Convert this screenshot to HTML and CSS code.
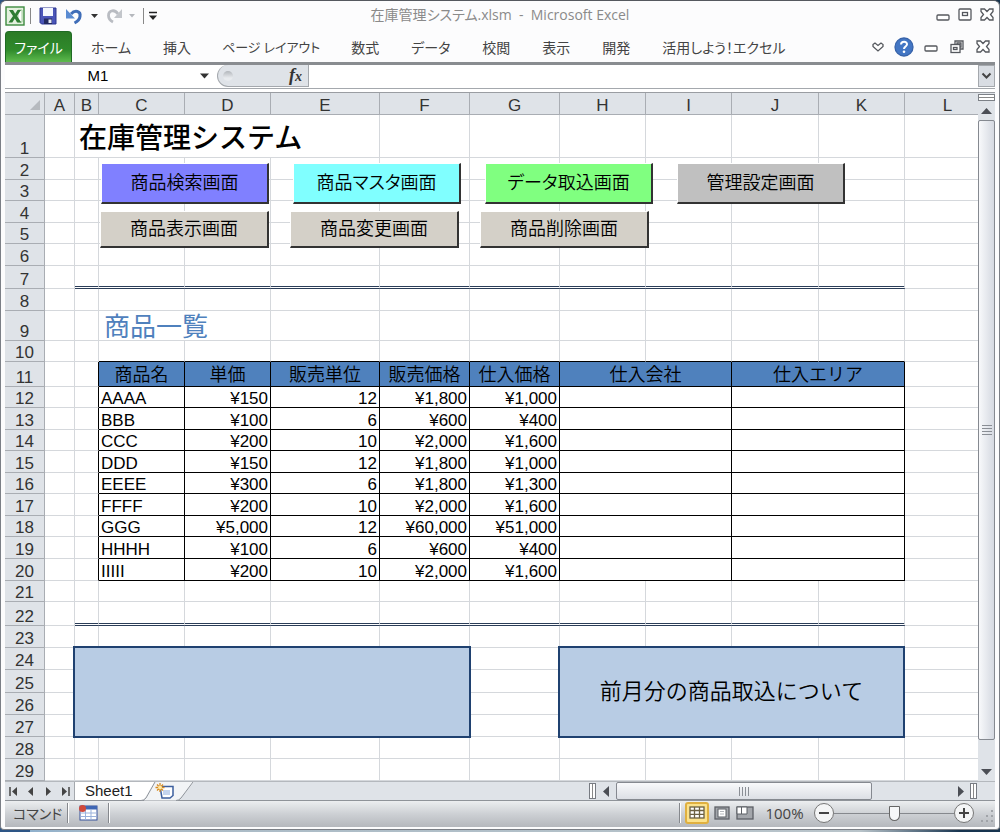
FILE: index.html
```html
<!DOCTYPE html>
<html lang="ja">
<head>
<meta charset="utf-8">
<title>在庫管理システム.xlsm - Microsoft Excel</title>
<link rel="stylesheet" href="styles.css">
</head>
<body>
<div class="window">
  <header class="titlebar">
    <div class="quick">
      <svg class="app-icon" width="20" height="20" viewBox="0 0 20 20" aria-hidden="true">
        <rect x="1" y="1" width="18" height="18" fill="#e4f1df" stroke="#3d8b3f" stroke-width="1.4"/>
        <path d="M13 4h4v12h-4z" fill="#fff" stroke="#8fc18a" stroke-width=".8"/>
        <path d="M4 4h4l2.200 3.800L12.500 4H16l-4 6 4.300 6.500h-4.200L9.800 12.500 7.300 16.500H3.500L8 10z" fill="#2e7d32"/>
      </svg>
      <span class="bar"></span>
      <button class="tool" aria-label="上書き保存">
        <svg width="18" height="18" viewBox="0 0 18 18"><path d="M1 1h16v16H2.500L1 15.500z" fill="#4a55b8" stroke="#2c3690"/><path d="M4 1h10v8H4z" fill="#f3f6fd"/><path d="M5 11.500h8V17H5z" fill="#232a60"/><path d="M9.500 12.500h3V16h-3z" fill="#e6eaf6"/></svg>
      </button>
      <button class="tool" aria-label="元に戻す">
        <svg width="18" height="18" viewBox="0 0 18 18"><path d="M6 7C10 2.500 16 4 15 9.500c-.4 3-2.500 5-5.500 6.500" fill="none" stroke="#3f6db8" stroke-width="3"/><path d="M1 2v9.500h9z" fill="#5a8bd2"/></svg>
      </button>
      <button class="tool caret" aria-label="元に戻す一覧"><svg width="8" height="8" viewBox="0 0 8 8"><path d="M0 2h7L3.500 6z" fill="#333"/></svg></button>
      <button class="tool redo" aria-label="やり直し">
        <svg width="18" height="18" viewBox="0 0 18 18"><path d="M12 7C9 2 2.500 3 2.500 8.500c0 3 1.500 5 4.500 6.500" fill="none" stroke="#b9bcc2" stroke-width="2.800"/><path d="M16 2v9H8z" fill="#c3c6cb"/></svg>
      </button>
      <button class="tool caret" aria-label="やり直し一覧"><svg width="8" height="8" viewBox="0 0 8 8"><path d="M1 2h6L4 5.500z" fill="#b5b8bd"/></svg></button>
      <span class="bar"></span>
      <button class="tool custom" aria-label="クイック アクセスのカスタマイズ"><svg width="10" height="12" viewBox="0 0 10 12"><path d="M1 2.500h8" stroke="#222" stroke-width="1.500"/><path d="M1 5.500h8L5 10z" fill="#222"/></svg></button>
    </div>
    <h1 class="caption">在庫管理システム.xlsm&nbsp; -&nbsp; Microsoft Excel</h1>
    <div class="controls">
      <button aria-label="最小化"><svg width="16" height="16" viewBox="0 0 16 16"><rect x="2" y="8" width="12" height="5" rx="1"/></svg></button>
      <button aria-label="最大化"><svg width="16" height="16" viewBox="0 0 16 16"><rect x="2" y="2" width="12" height="11" rx="1"/><rect x="5.500" y="5.500" width="5" height="3"/></svg></button>
      <button aria-label="閉じる"><svg width="16" height="16" viewBox="0 0 16 16"><path d="M2 2h3.500L8 4.500 10.500 2H14v2.500l-2.500 3L14 10.500V13h-3.500L8 10.500 5.500 13H2v-2.500l2.500-3L2 4.500z"/></svg></button>
    </div>
  </header>

  <nav class="ribbon">
    <a class="file" href="#file">ファイル</a>
    <a href="#home">ホーム</a>
    <a href="#insert">挿入</a>
    <a href="#layout" class="tight">ページ レイアウト</a>
    <a href="#formula">数式</a>
    <a href="#data">データ</a>
    <a href="#review">校閲</a>
    <a href="#view">表示</a>
    <a href="#dev">開発</a>
    <a href="#use">活用しよう！エクセル</a>
    <div class="controls doc">
      <button aria-label="リボンの最小化"><svg width="16" height="16" viewBox="0 0 16 16"><path d="M3 5.500L5 4l3 2.500L11 4l2 1.500v2L8 12 3 7.500z"/></svg></button>
      <button aria-label="ヘルプ" class="help"><svg width="20" height="20" viewBox="0 0 20 20"><circle cx="10" cy="10" r="9" fill="#4376c4" stroke="#3763aa"/><path d="M7 7.500C7.200 3.800 13.300 4 13 7.500c-.2 2-3 2.200-3 4.500" fill="none" stroke="#fff" stroke-width="2"/><circle cx="10" cy="14.800" r="1.300" fill="#fff" stroke="none"/></svg></button>
      <button aria-label="ブックの最小化"><svg width="16" height="16" viewBox="0 0 16 16"><rect x="2" y="7" width="12" height="5" rx="1"/></svg></button>
      <button aria-label="ブックを元に戻す"><svg width="16" height="16" viewBox="0 0 16 16"><path d="M6 5V2h8v8h-3"/><path d="M8 5V4h4v4h-1"/><rect x="2" y="5.500" width="9" height="8"/><rect x="4.500" y="8.500" width="3.500" height="2"/></svg></button>
      <button aria-label="ブックを閉じる"><svg width="16" height="16" viewBox="0 0 16 16"><path d="M2 2h3.500L8 4.500 10.500 2H14v2.500l-2.500 3L14 10.500V13h-3.500L8 10.500 5.500 13H2v-2.500l2.500-3L2 4.500z"/></svg></button>
    </div>
  </nav>

  <div class="formula">
    <input class="name" type="text" value="M1" aria-label="名前ボックス">
    <button class="drop" aria-label="名前の一覧"><svg width="9" height="6" viewBox="0 0 9 6"><path d="M0 .5h9L4.500 5.500z" fill="#333"/></svg></button>
    <div class="fx">
      <span class="knob"></span>
      <button aria-label="関数の挿入"><i>f</i><i class="sub">x</i></button>
    </div>
    <input class="entry" type="text" aria-label="数式バー">
    <button class="expand" aria-label="数式バーの展開"><svg width="11" height="8" viewBox="0 0 11 8"><path d="M1.500 1.500l4 4 4-4" fill="none" stroke="#444" stroke-width="2"/></svg></button>
  </div>

  <main class="work">
    <div class="sheet">
      <table class="grid">
        <colgroup><col class="w-head"><col class="w-a"><col class="w-b"><col class="w-m"><col class="w-m"><col class="w-e"><col class="w-f"><col class="w-f"><col class="w-m"><col class="w-m"><col class="w-j"><col class="w-m"><col></colgroup>
        <thead>
          <tr class="r22"><th class="corner"><svg width="10" height="10" viewBox="0 0 10 10" aria-hidden="true"><path d="M10 0v10H0z" fill="#b6babf"/></svg></th><th>A</th><th>B</th><th>C</th><th>D</th><th>E</th><th>F</th><th>G</th><th>H</th><th>I</th><th>J</th><th>K</th><th class="last">L</th></tr>
        </thead>
        <tbody>
          <tr class="r43"><th>1</th><td></td><td colspan="4" class="title">在庫管理システム</td><td></td><td></td><td></td><td></td><td></td><td></td><td class="last"></td></tr>
          <tr class="r22"><th>2</th><td></td><td></td><td></td><td></td><td></td><td></td><td></td><td></td><td></td><td></td><td></td><td class="last"></td></tr>
          <tr class="r21"><th>3</th><td></td><td></td><td></td><td></td><td></td><td></td><td></td><td></td><td></td><td></td><td></td><td class="last"></td></tr>
          <tr class="r22"><th>4</th><td></td><td></td><td></td><td></td><td></td><td></td><td></td><td></td><td></td><td></td><td></td><td class="last"></td></tr>
          <tr class="r21"><th>5</th><td></td><td></td><td></td><td></td><td></td><td></td><td></td><td></td><td></td><td></td><td></td><td class="last"></td></tr>
          <tr class="r22"><th>6</th><td></td><td></td><td></td><td></td><td></td><td></td><td></td><td></td><td></td><td></td><td></td><td class="last"></td></tr>
          <tr class="r23 ruled"><th>7</th><td class="plain"></td><td></td><td></td><td></td><td></td><td></td><td></td><td></td><td></td><td></td><td></td><td class="last"></td></tr>
          <tr class="r22"><th>8</th><td></td><td></td><td></td><td></td><td></td><td></td><td></td><td></td><td></td><td></td><td></td><td class="last"></td></tr>
          <tr class="r30"><th>9</th><td></td><td></td><td colspan="2" class="subtitle">商品一覧</td><td></td><td></td><td></td><td></td><td></td><td></td><td></td><td class="last"></td></tr>
          <tr class="r21 above"><th>10</th><td></td><td></td><td></td><td></td><td></td><td></td><td></td><td></td><td></td><td></td><td></td><td class="last"></td></tr>
          <tr class="r25 heads"><th>11</th><td></td><td class="edge"></td><td>商品名</td><td>単価</td><td>販売単位</td><td>販売価格</td><td>仕入価格</td><td colspan="2">仕入会社</td><td colspan="2">仕入エリア</td><td class="last"></td></tr>
          <tr class="r21 item"><th>12</th><td></td><td class="edge"></td><td class="text">AAAA</td><td>¥150</td><td>12</td><td>¥1,800</td><td>¥1,000</td><td colspan="2"></td><td colspan="2"></td><td class="last"></td></tr>
          <tr class="r22 item"><th>13</th><td></td><td class="edge"></td><td class="text">BBB</td><td>¥100</td><td>6</td><td>¥600</td><td>¥400</td><td colspan="2"></td><td colspan="2"></td><td class="last"></td></tr>
          <tr class="r21 item"><th>14</th><td></td><td class="edge"></td><td class="text">CCC</td><td>¥200</td><td>10</td><td>¥2,000</td><td>¥1,600</td><td colspan="2"></td><td colspan="2"></td><td class="last"></td></tr>
          <tr class="r22 item"><th>15</th><td></td><td class="edge"></td><td class="text">DDD</td><td>¥150</td><td>12</td><td>¥1,800</td><td>¥1,000</td><td colspan="2"></td><td colspan="2"></td><td class="last"></td></tr>
          <tr class="r21 item"><th>16</th><td></td><td class="edge"></td><td class="text">EEEE</td><td>¥300</td><td>6</td><td>¥1,800</td><td>¥1,300</td><td colspan="2"></td><td colspan="2"></td><td class="last"></td></tr>
          <tr class="r22 item"><th>17</th><td></td><td class="edge"></td><td class="text">FFFF</td><td>¥200</td><td>10</td><td>¥2,000</td><td>¥1,600</td><td colspan="2"></td><td colspan="2"></td><td class="last"></td></tr>
          <tr class="r21 item"><th>18</th><td></td><td class="edge"></td><td class="text">GGG</td><td>¥5,000</td><td>12</td><td>¥60,000</td><td>¥51,000</td><td colspan="2"></td><td colspan="2"></td><td class="last"></td></tr>
          <tr class="r22 item"><th>19</th><td></td><td class="edge"></td><td class="text">HHHH</td><td>¥100</td><td>6</td><td>¥600</td><td>¥400</td><td colspan="2"></td><td colspan="2"></td><td class="last"></td></tr>
          <tr class="r22 item"><th>20</th><td></td><td class="edge"></td><td class="text">IIIII</td><td>¥200</td><td>10</td><td>¥2,000</td><td>¥1,600</td><td colspan="2"></td><td colspan="2"></td><td class="last"></td></tr>
          <tr class="r21"><th>21</th><td></td><td></td><td></td><td></td><td></td><td></td><td></td><td></td><td></td><td></td><td></td><td class="last"></td></tr>
          <tr class="r24 ruled"><th>22</th><td class="plain"></td><td></td><td></td><td></td><td></td><td></td><td></td><td></td><td></td><td></td><td></td><td class="last"></td></tr>
          <tr class="r22"><th>23</th><td></td><td></td><td></td><td></td><td></td><td></td><td></td><td></td><td></td><td></td><td></td><td class="last"></td></tr>
          <tr class="r22"><th>24</th><td></td><td></td><td></td><td></td><td></td><td></td><td></td><td></td><td></td><td></td><td></td><td class="last"></td></tr>
          <tr class="r23"><th>25</th><td></td><td></td><td></td><td></td><td></td><td></td><td></td><td></td><td></td><td></td><td></td><td class="last"></td></tr>
          <tr class="r22"><th>26</th><td></td><td></td><td></td><td></td><td></td><td></td><td></td><td></td><td></td><td></td><td></td><td class="last"></td></tr>
          <tr class="r22"><th>27</th><td></td><td></td><td></td><td></td><td></td><td></td><td></td><td></td><td></td><td></td><td></td><td class="last"></td></tr>
          <tr class="r22"><th>28</th><td></td><td></td><td></td><td></td><td></td><td></td><td></td><td></td><td></td><td></td><td></td><td class="last"></td></tr>
          <tr class="r22"><th>29</th><td></td><td></td><td></td><td></td><td></td><td></td><td></td><td></td><td></td><td></td><td></td><td class="last"></td></tr>
        </tbody>
      </table>
      <div class="macros macros-main">
        <button class="macro violet">商品検索画面</button>
        <button class="macro cyan">商品マスタ画面</button>
        <button class="macro green">データ取込画面</button>
        <button class="macro gray">管理設定画面</button>
      </div>
      <div class="macros macros-sub">
        <button class="macro">商品表示画面</button>
        <button class="macro">商品変更画面</button>
        <button class="macro">商品削除画面</button>
      </div>
      <div class="note note-left"></div>
      <div class="note note-right">前月分の商品取込について</div>
    </div>
    <div class="vscroll">
      <span class="vsplit"></span>
      <button aria-label="上へスクロール"><svg width="11" height="6" viewBox="0 0 11 6"><path d="M0 6h11L5.500 0z" fill="#4b4e55"/></svg></button>
      <div class="vtrack"><div class="vthumb"></div></div>
      <button aria-label="下へスクロール"><svg width="11" height="6" viewBox="0 0 11 6"><path d="M0 0h11L5.500 6z" fill="#4b4e55"/></svg></button>
    </div>
  </main>

  <div class="tabs">
    <div class="nav">
      <button aria-label="先頭のシート"><svg width="9" height="9" viewBox="0 0 9 9"><path d="M1 0v9" stroke="#444" stroke-width="1.500"/><path d="M8 0v9L3 4.500z" fill="#444"/></svg></button>
      <button aria-label="前のシート"><svg width="9" height="9" viewBox="0 0 9 9"><path d="M7 0v9L2 4.500z" fill="#444"/></svg></button>
      <button aria-label="次のシート"><svg width="9" height="9" viewBox="0 0 9 9"><path d="M2 0v9l5-4.500z" fill="#444"/></svg></button>
      <button aria-label="最後のシート"><svg width="9" height="9" viewBox="0 0 9 9"><path d="M8 0v9" stroke="#444" stroke-width="1.500"/><path d="M1 0v9l5-4.500z" fill="#444"/></svg></button>
    </div>
    <a class="tab" href="#sheet1">Sheet1</a>
    <button class="add" aria-label="ワークシートの挿入">
      <svg width="56" height="19" viewBox="0 0 56 19"><path d="M0 0h14L4 16Q2 18.500 0 18.500z" fill="#fff"/><path d="M13 0h40L40 16q-2 2.500-5 2.500H3z" fill="#f2f4f6"/><path d="M0 18.500Q3 18.500 5 16L14 0M35 18.500q3 0 5-2.500L52 0" fill="none" stroke="#8e939a"/><path d="M19 4.500h13v9l-3 2.500h-8z" fill="#fff" stroke="#3d5f9e" stroke-width="1.500"/><path d="M22 8h7v5h-7z" fill="#c4d4ee"/><path d="M19 1v9M14.500 5.500h9M16 2.500l6 6M22 2.500l-6 6" stroke="#d88b22" stroke-width="1.300"/><circle cx="19" cy="5.500" r="2" fill="#ffe9a3"/></svg>
    </button>
    <div class="space"></div>
    <div class="hscroll">
      <span class="hsplit"></span>
      <button aria-label="左へスクロール"><svg width="7" height="11" viewBox="0 0 7 11"><path d="M6 0v11L0 5.500z" fill="#4b4e55"/></svg></button>
      <div class="htrack"><div class="hthumb"></div></div>
      <button aria-label="右へスクロール"><svg width="7" height="11" viewBox="0 0 7 11"><path d="M1 0v11l6-5.500z" fill="#4b4e55"/></svg></button>
      <span class="hsplit"></span>
    </div>
  </div>

  <footer class="status">
    <span class="mode">コマンド</span>
    <span class="divider"></span>
    <button class="record" aria-label="マクロの記録"><svg width="20" height="18" viewBox="0 0 20 18"><rect x="2" y="2" width="17" height="14" fill="#fff" stroke="#35509a"/><path d="M2 2h17v3.500H2z" fill="#3f66b4"/><path d="M2.500 9h16M2.500 12.500h16M7.500 5.500V16M13 5.500V16" stroke="#9ab2dc"/><circle cx="4.500" cy="4.500" r="3.500" fill="#d0483a"/></svg></button>
    <span class="divider"></span>
    <div class="space"></div>
    <span class="divider"></span>
    <div class="views">
      <button class="on" aria-label="標準"><svg width="16" height="14" viewBox="0 0 16 14"><rect x="1" y="1" width="14" height="11" fill="#fff" stroke="#6b6042" stroke-width="1.300"/><path d="M1 4.500h14M1 8.300h14M5.500 1v11M10.500 1v11" stroke="#6b6042" stroke-width="1.300"/></svg></button>
      <button aria-label="ページ レイアウト"><svg width="16" height="14" viewBox="0 0 16 14"><rect x="1" y="1" width="14" height="12" fill="#a3a6ab" stroke="#5d6066" stroke-width="1.300"/><rect x="4" y="3" width="8" height="8" fill="#fff" stroke="#5d6066"/><path d="M6 5.500h4M6 8h4" stroke="#b5b8bd"/></svg></button>
      <button aria-label="改ページ プレビュー"><svg width="18" height="14" viewBox="0 0 18 14"><rect x="1" y="1" width="16" height="12" fill="#a3a6ab" stroke="#5d6066" stroke-width="1.300"/><path d="M1 1h4.500v7H1zM5.500 1H11v7H5.500z" fill="#fff" stroke="#5d6066"/></svg></button>
    </div>
    <button class="percent">100%</button>
    <div class="zoom">
      <button class="round" aria-label="縮小"><svg width="10" height="10" viewBox="0 0 10 10"><path d="M0 5h10" stroke="#444" stroke-width="2"/></svg></button>
      <input type="range" min="0" max="100" value="50" aria-label="ズーム">
      <button class="round" aria-label="拡大"><svg width="10" height="10" viewBox="0 0 10 10"><path d="M0 5h10M5 0v10" stroke="#444" stroke-width="2"/></svg></button>
    </div>
    <svg class="sizer" width="14" height="14" viewBox="0 0 14 14" aria-hidden="true"><path d="M10 1h2v2h-2zM10 6h2v2h-2zM10 11h2v2h-2zM5 6h2v2H5zM5 11h2v2H5zM0 11h2v2H0z" fill="#a0a3a8"/></svg>
  </footer>
</div>
</body>
</html>
```
FILE: styles.css
```css
* { box-sizing: border-box; }

body {
  margin: 0;
  background: linear-gradient(90deg, #2d5585 0, #2d5585 30px, #8fb0cc 30px, #a9bac6 110px, #b9c4ca 86%, #17344f 96%);
  font-family: "Liberation Sans", "Noto Sans CJK JP", sans-serif;
  color: #222;
}

button {
  margin: 0;
  padding: 0;
  border: 0;
  background: none;
  color: inherit;
  font: inherit;
  display: flex;
  align-items: center;
  justify-content: center;
}

a { color: inherit; text-decoration: none; }
svg { display: block; }

.window {
  display: flex;
  flex-direction: column;
  min-height: calc(100vh - 4px);
  padding: 0 4px 2px;
  border: 1px solid #7b7f86;
  border-top-color: #55595f;
  border-radius: 6px 6px 4px 4px;
  background: #fcfcfd;
}

/* title bar */
.titlebar {
  display: grid;
  grid-template-columns: 1fr auto 1fr;
  align-items: center;
  height: 30px;
}

.quick { display: flex; align-items: center; height: 30px; }
.bar { width: 1px; height: 16px; margin: 0 8px 0 5px; background: #888; }
.tool { margin-right: 8px; }
.tool.caret { margin-right: 7px; }
.tool.redo { margin-right: 4px; }
.tool.custom { margin: 0; }
.caret + .bar { margin: 0 4px 0 0; }

.caption {
  margin: 0;
  padding-bottom: 2px;
  color: #8a8a8a;
  font: 400 14px/20px "Open Sans", "Noto Sans CJK JP", sans-serif;
  font-feature-settings: "palt";
}

.controls { display: flex; justify-content: flex-end; align-items: center; gap: 6px; }
.controls svg { fill: #fff; stroke: #55585e; stroke-width: 1.300; }
.titlebar .controls { padding-bottom: 2px; }

/* ribbon */
.ribbon {
  display: flex;
  align-items: center;
  height: 34px;
  border-bottom: 3px solid #898c90;
  color: #444;
  font: 400 14px/20px "Noto Sans CJK JP", sans-serif;
  font-feature-settings: "palt";
}

.ribbon a { padding: 0 16px; white-space: nowrap; }
.ribbon .tight { padding: 0 15px; font-size: 13px; }

.ribbon .file {
  display: flex;
  align-items: center;
  justify-content: center;
  align-self: stretch;
  width: 67px;
  margin-right: 3px;
  padding: 0;
  border: 1px solid #1f6a24;
  border-bottom: 0;
  border-radius: 4px 4px 0 0;
  background: linear-gradient(#2b7a26, #2f8a2b 60%, #5fbb4e);
  color: #fff;
}

.controls.doc { flex: 1; gap: 10px; padding-right: 4px; }
.doc .help { margin: 0 -1px 0 -2px; }

/* formula bar */
.formula {
  display: flex;
  height: 28px;
  border-bottom: 1px solid #9a9da2;
  box-shadow: inset 0 -3px #fff, inset 0 -4px #a4a8ad;
  padding-bottom: 5px;
  background: #fff;
}

.formula input { border: 0; outline: 0; background: #fff; padding: 0; font: 15px/20px "Liberation Sans", sans-serif; }
.formula .name { width: 186px; text-align: center; }
.drop { width: 26px; }

.fx {
  display: flex;
  align-items: center;
  justify-content: space-between;
  width: 92px;
  padding: 0 6px 0 5px;
  border: 1px solid #a4a8ad;
  border-top: 0;
  border-radius: 12px 0 0 12px;
  background: #dfe3e8;
}

.knob { width: 10px; height: 10px; border-radius: 50%; background: linear-gradient(#b2b6bb, #e8ebee 70%); }
.fx button { font: 700 18px/20px "Liberation Serif", serif; color: #333; align-items: baseline; }
.fx .sub { font-size: 14px; }
.entry { flex: 1; min-width: 0; }
.expand { width: 17px; border: 1px solid #a4a8ad; background: #d9dde3; }

/* worksheet */
.work { display: flex; flex: 1; }
.sheet { position: relative; flex: 1; min-width: 0; background: #fff; }

.grid { width: 100%; table-layout: fixed; border-collapse: separate; border-spacing: 0; font-size: 17px; line-height: 17px; }
.w-head { width: 40px; }
.w-a { width: 30px; }
.w-b { width: 24px; }
.w-m { width: 86px; }
.w-e { width: 109px; }
.w-f { width: 90px; }
.w-j { width: 87px; }

.r21 { height: 21px; }
.r22 { height: 22px; }
.r23 { height: 23px; }
.r24 { height: 24px; }
.r25 { height: 25px; }
.r30 { height: 30px; }
.r43 { height: 43px; }

.grid th, .grid td {
  padding: 0 2px;
  border: 0 solid #d5d8dc;
  border-width: 0 1px 1px 0;
  vertical-align: bottom;
  white-space: nowrap;
}

.grid th {
  border-color: #a9adb3;
  background: #dfe3e8;
  color: #333;
  font-weight: 400;
  text-align: center;
}

.grid .last { border-right: 0; }
.grid th.last { padding-left: 14px; }
.grid .corner svg { margin: 0 2px 4px auto; }
.grid .title { padding-left: 4px; font-size: 28px; line-height: 36px; font-weight: 500; color: #000; }
.grid .subtitle { padding-left: 5px; font-size: 26px; line-height: 26px; color: #4f81bd; font-weight: 400; }
.ruled td:not(.plain):not(.last) { border-bottom: 3px double #2b3d58; }
.above td:nth-child(n+4):not(.last) { border-bottom-color: #000; }
.grid .edge { border-right-color: #000; }
.heads td:nth-child(n+4):not(.last),
.item td:nth-child(n+4):not(.last) { border-color: #000; color: #000; }
.heads td:nth-child(n+4):not(.last) { background: #4f81bd; text-align: center; font-size: 18px; line-height: 22px; font-weight: 350; }
.item td { text-align: right; }
.item .text { text-align: left; }

/* objects floating over the cells */
.macros { position: absolute; display: flex; }
.macros-main { top: 70px; left: 96px; gap: 24px; }
.macros-sub { top: 118px; left: 95px; gap: 21px; }

.macro {
  width: 168px;
  height: 41px;
  border: 1px solid #fff;
  border-right: 2px solid #333;
  border-bottom: 2px solid #333;
  background: #d4d0c8;
  color: #000;
  font-size: 18px;
  line-height: 24px;
  font-weight: 350;
  font-feature-settings: "palt";
}

.macros-sub .macro { width: 169px; height: 37px; }
.violet { background: #8080ff; }
.cyan { background: #80ffff; }
.green { background: #80ff80; }
.gray { background: #c0c0c0; }

.note {
  position: absolute;
  top: 553px;
  display: flex;
  align-items: center;
  justify-content: center;
  height: 92px;
  border: 2px solid #1f4170;
  background: #b8cce4;
  color: #000;
  font-size: 22px;
  line-height: 30px;
  font-weight: 350;
}

.note-left { left: 68px; width: 398px; }
.note-right { left: 553px; width: 347px; }

/* scrollbars */
.vscroll { display: flex; flex-direction: column; width: 17px; background: #dfe3e8; }
.vsplit { height: 7px; margin-top: 1px; border: 1px solid #7d8187; background: linear-gradient(#fff 2px, #888 2px, #888 3px, #fff 3px); }
.vscroll button { height: 19px; }
.vtrack { flex: 1; padding-bottom: 22px; display: flex; }

.vthumb {
  flex: 1;
  border: 1px solid #858990;
  border-radius: 2px;
  background:
    repeating-linear-gradient(#8a8e95 0, #8a8e95 1px, transparent 1px, transparent 3px) center / 10px 10px no-repeat,
    linear-gradient(90deg, #f8f9fb, #d5d9e1);
}

.tabs { display: flex; height: 20px; border-top: 1px solid #b4b8bd; border-bottom: 1px solid #8f9399; background: #dfe3e8; }
.nav { display: flex; width: 70px; border-right: 1px solid #a4a8ad; }
.nav button { flex: 1; }
.tab { padding: 0 0 0 10px; background: #fff; font-size: 15px; line-height: 18px; width: 66px; }
.space { flex: 1; }
.hscroll { display: flex; align-items: center; width: 41%; padding-right: 18px; }
.hsplit { width: 7px; height: 16px; border: 1px solid #777b82; background: linear-gradient(90deg, #fff 2px, #888 2px, #888 3px, #fff 3px); }
.hscroll button { width: 20px; height: 18px; }
.htrack { flex: 1; display: flex; align-self: stretch; padding-right: 78px; }

.hthumb {
  flex: 1;
  border: 1px solid #858990;
  border-radius: 2px;
  background:
    repeating-linear-gradient(90deg, #8a8e95 0, #8a8e95 1px, transparent 1px, transparent 3px) center / 10px 9px no-repeat,
    linear-gradient(#f8f9fb, #dcdfe5);
}

/* status bar */
.status {
  display: flex;
  align-items: center;
  height: 26px;
  padding-bottom: 2px;
  background: linear-gradient(#eceef0, #cdd0d4 50%, #b5b8bd);
  color: #444;
}

.mode { width: 62px; padding-left: 8px; font: 400 14px/20px "Noto Sans CJK JP", sans-serif; font-feature-settings: "palt"; }
.divider { width: 2px; height: 20px; background: linear-gradient(90deg, #85888d 1px, #fff 1px); }
.record { margin: 0 10px 0 9px; }
.views { display: flex; gap: 2px; margin-left: 4px; }
.views button { width: 21px; height: 22px; }
.views .on { width: 24px; border: 2px solid #e0b040; border-radius: 3px; background: #fbe28c; }
.percent { width: 59px; font: 400 15px/20px "Open Sans", sans-serif; }
.zoom { display: flex; align-items: center; }
.round { width: 20px; height: 20px; border: 1px solid #777; border-radius: 50%; background: #f4f5f6; }

.zoom input {
  -webkit-appearance: none;
  appearance: none;
  width: 120px;
  height: 18px;
  margin: 0;
  background: linear-gradient(#85888d, #85888d) center / 100% 1px no-repeat;
}

.zoom input::-webkit-slider-thumb {
  -webkit-appearance: none;
  width: 11px;
  height: 15px;
  border: 1px solid #666;
  border-radius: 1px 1px 6px 6px;
  background: #f6f7f8;
}

.sizer { margin: 6px 0 0 7px; }
```
